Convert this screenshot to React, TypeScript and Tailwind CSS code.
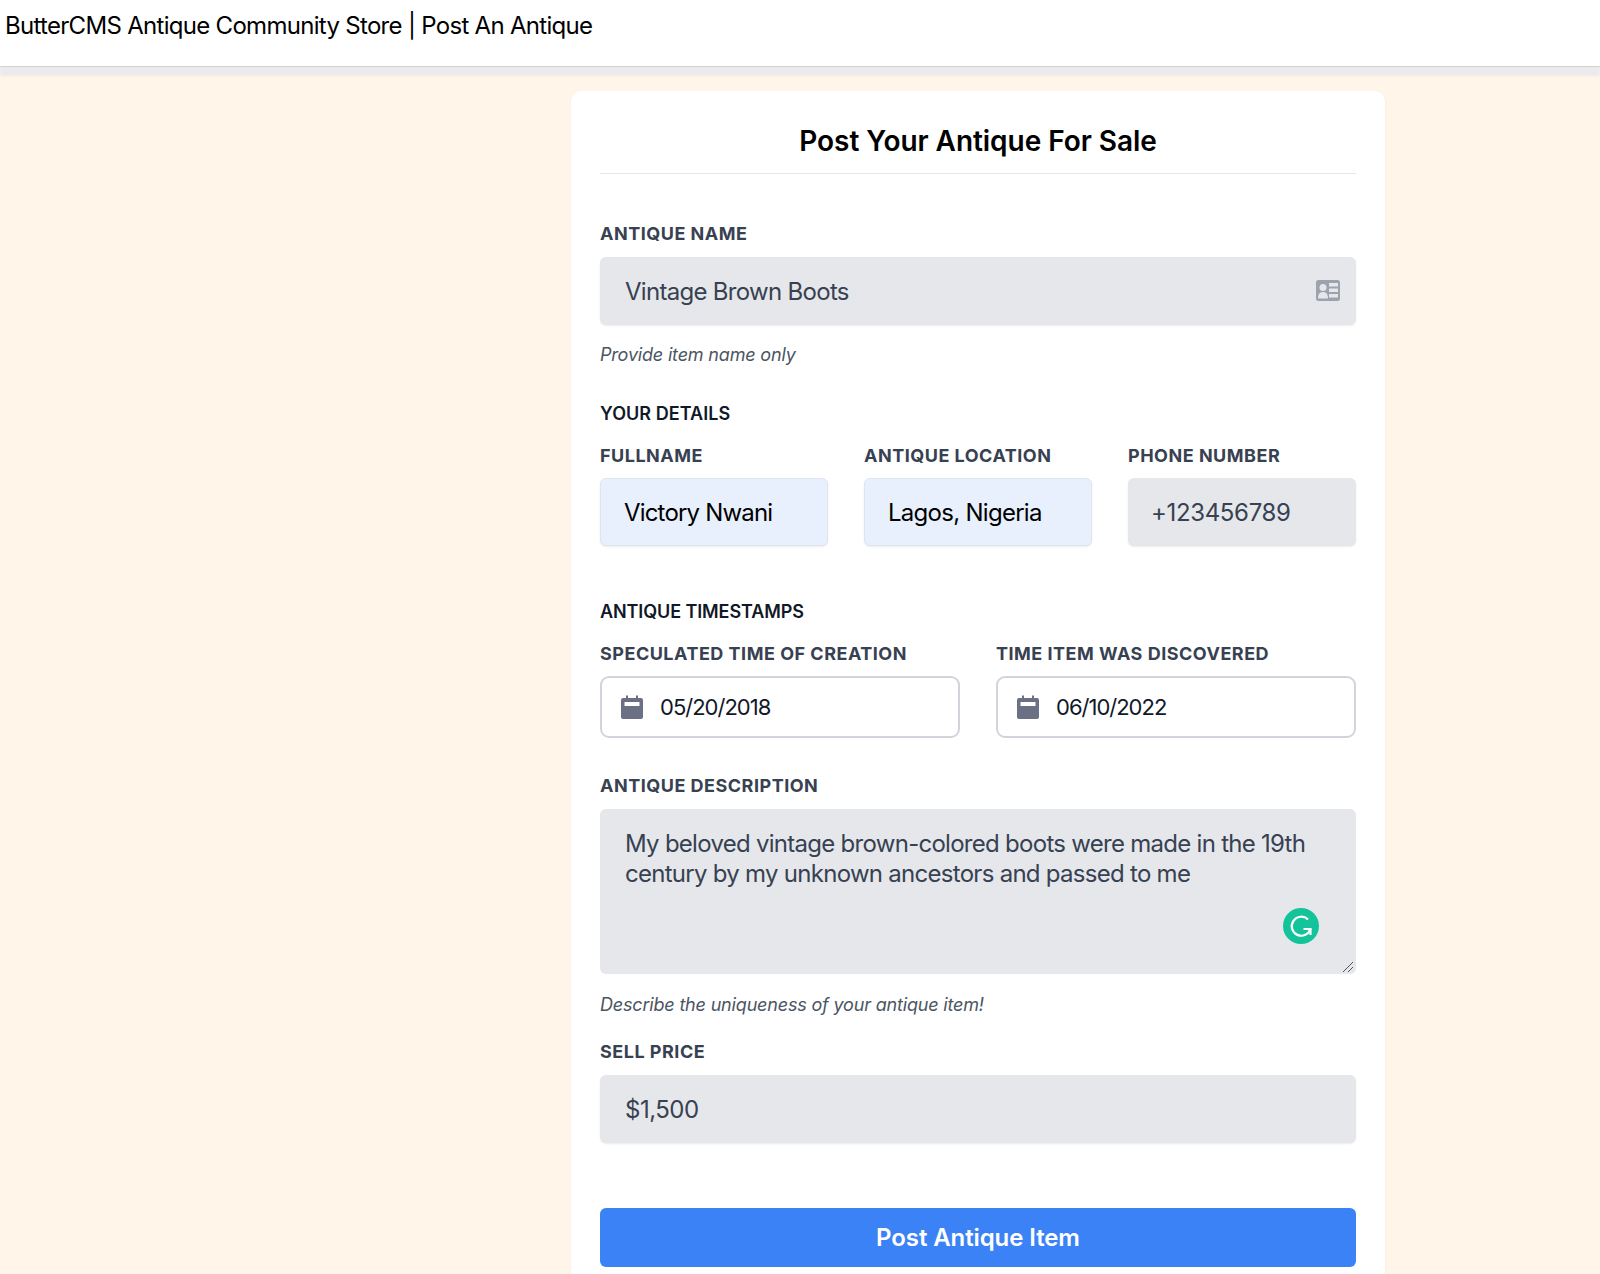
import { ReactNode } from 'react'

const labelCls = 'block text-[18px] leading-[24px] font-bold tracking-[0.5px] text-[#374151] uppercase'
const filled = 'block w-full h-[68px] rounded-[6px] text-[24px] leading-[32px] outline-none shadow-[0_1px_2px_rgba(0,0,0,0.08)]'
const helperCls = 'text-[18px] leading-[24px] tracking-[-0.18px] text-[#4b5563] italic'

function Field({ label, children }: { label: string; children: ReactNode }) {
  return (
    <div className="min-w-0 flex-1">
      <label className={labelCls}>{label}</label>
      {children}
    </div>
  )
}

function CalendarIcon() {
  return (
    <svg viewBox="0 0 24 24" className="h-[24px] w-[24px] shrink-0" fill="#6b7085">
      <path d="M6 0.5h2v2.5h8V0.500h2V3h3a2 2 0 0 1 2 2v17a2 2 0 0 1-2 2H3a2 2 0 0 1-2-2V5a2 2 0 0 1 2-2h3V0.500z" />
      <rect x="4.500" y="7" width="15" height="4" rx="0.5" fill="#ffffff" />
    </svg>
  )
}

function DateInput({ value }: { value: string }) {
  return (
    <div className="mt-[10px] flex h-[62px] items-center gap-[16px] rounded-[9px] border-2 border-[#d1d5db] bg-white pl-[18px] pr-4">
      <CalendarIcon />
      <input readOnly value={value} className="w-full bg-transparent text-[22px] tracking-[-1px] text-[#111827] outline-none" />
    </div>
  )
}

function CardIcon() {
  return (
    <svg viewBox="0 0 24 21" className="absolute right-[16px] top-[23px] h-[21px] w-[24px]">
      <rect width="24" height="21" rx="2.5" fill="#9ca3af" />
      <circle cx="7" cy="7.500" r="3.500" fill="#e5e7eb" />
      <path d="M2 18.500c0-4.500 2-6.500 5-6.500s5 2 5 6.500z" fill="#e5e7eb" />
      <rect x="13" y="3" width="9" height="3.500" fill="#e5e7eb" />
      <rect x="13" y="8.500" width="9" height="3.500" fill="#e5e7eb" />
      <rect x="13" y="14" width="9" height="3.500" fill="#e5e7eb" />
    </svg>
  )
}

export default function App() {
  return (
    <div className="min-h-[1274px] overflow-hidden bg-[#fff5e9] font-['Inter',sans-serif]">
      <header className="flex h-[66px] items-start bg-white pl-[5px] pt-[10px] shadow-[0_1px_1px_rgba(0,0,0,0.1),0_10px_2px_#ebebed]">
        <h1 className="text-[24px] leading-[32px] tracking-[-0.7px] text-black">ButterCMS Antique Community Store | Post An Antique</h1>
      </header>

      <main className="ml-[571px] mt-[25px] w-[814px] rounded-t-[10px] bg-white px-[29px] pb-[40px] pt-[31px] shadow-[0_1px_3px_rgba(0,0,0,0.05)]">
        <h2 className="border-b border-[#e5e7eb] pb-[13px] text-center text-[28px] leading-[38px] font-semibold tracking-[-0.05px] text-black">Post Your Antique For Sale</h2>

        <div className="mt-[48px]">
          <label className={labelCls}>Antique Name</label>
          <div className="relative mt-[11px]">
            <input readOnly value="Vintage Brown Boots" className={filled + ' bg-[#e5e7eb] px-[25px] tracking-[-0.7px] text-[#374151]'} />
            <CardIcon />
          </div>
          <p className={helperCls + ' mt-[18px]'}>Provide item name only</p>
        </div>

        <h3 className="mt-[35px] text-[18px] leading-[24px] font-semibold tracking-[0.05px] text-[#111827] uppercase">Your Details</h3>
        <div className="mt-[18px] flex gap-[36px]">
          <Field label="Fullname">
            <input readOnly value="Victory Nwani" className={filled + ' mt-[10px] border border-[#dfe5f0] bg-[#e8f0fe] px-[23px] tracking-[-0.82px] text-black'} />
          </Field>
          <Field label="Antique Location">
            <input readOnly value="Lagos, Nigeria" className={filled + ' mt-[10px] border border-[#dfe5f0] bg-[#e8f0fe] px-[23px] tracking-[-0.72px] text-black'} />
          </Field>
          <Field label="Phone Number">
            <input readOnly value="+123456789" className={filled + ' mt-[10px] bg-[#e5e7eb] px-[23px] tracking-[-0.35px] text-[#374151]'} />
          </Field>
        </div>

        <h3 className="mt-[54px] text-[18px] leading-[24px] font-semibold tracking-[-0.1px] text-[#111827] uppercase">Antique Timestamps</h3>
        <div className="mt-[18px] flex gap-[36px]">
          <Field label="Speculated Time of Creation">
            <DateInput value="05/20/2018" />
          </Field>
          <Field label="Time Item Was Discovered">
            <DateInput value="06/10/2022" />
          </Field>
        </div>

        <div className="mt-[36px]">
          <label className={labelCls}>Antique Description</label>
          <div className="relative mt-[11px]">
            <textarea
              readOnly
              rows={5}
              value="My beloved vintage brown-colored boots were made in the 19th century by my unknown ancestors and passed to me"
              className="block h-[165px] w-full resize-none rounded-[6px] bg-[#e5e7eb] px-[25px] py-[20px] text-[24px] leading-[30px] tracking-[-0.72px] text-[#374151] outline-none"
            />
            <div className="absolute right-[37px] top-[99px] h-[36px] w-[36px] rounded-full bg-[#15c39a]">
              <svg viewBox="0 0 36 36" className="h-[36px] w-[36px]" fill="none" stroke="#ffffff" strokeWidth="2.2">
                <path d="M25 11.500A9.500 9.500 0 1 0 27.500 20.500" />
                <path d="M20.500 21H27.500V27" />
              </svg>
            </div>
            <svg viewBox="0 0 10 10" className="absolute bottom-[2px] right-[3px] h-[10px] w-[10px]" fill="none" stroke="#4b5563" strokeWidth="1">
              <path d="M0 10L10 0M5 10L10 5" />
            </svg>
          </div>
          <p className={helperCls + ' mt-[19px]'}>Describe the uniqueness of your antique item!</p>
        </div>

        <div className="mt-[23px]">
          <label className={labelCls}>Sell Price</label>
          <input readOnly value="$1,500" className={filled + ' mt-[11px] bg-[#e5e7eb] px-[25px] tracking-[-0.5px] text-[#374151]'} />
        </div>

        <button className="mt-[65px] block h-[59px] w-full rounded-[6px] bg-[#3b82f6] text-[24px] font-semibold tracking-[-0.1px] text-white">Post Antique Item</button>
      </main>
    </div>
  )
}
